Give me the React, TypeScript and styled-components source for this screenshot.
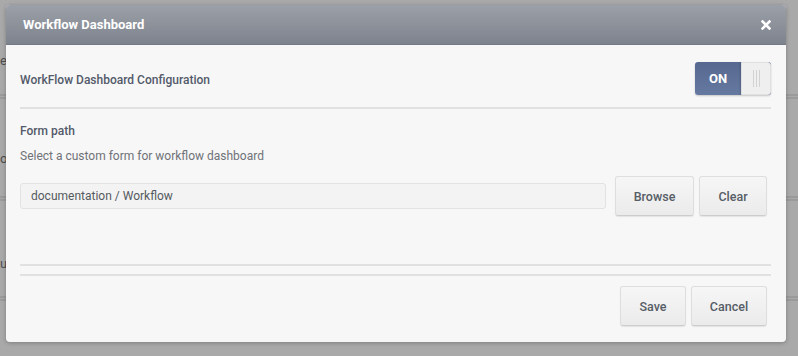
import React, { useState } from "react";
import styled, { createGlobalStyle } from "styled-components";

const GlobalStyle = createGlobalStyle`
  html, body {
    margin: 0;
    padding: 0;
    background: #a9a9a9;
    font-family: Roboto, "Liberation Sans", Arial, sans-serif;
  }
  #root {
    width: 798px;
    height: 356px;
    overflow: hidden;
    position: relative;
  }
`

const Backdrop = styled.div`
  width: 798px;
  height: 356px;
  background: #a9a9a9;
  display: flex;
  flex-direction: column;
  box-sizing: border-box;
`

const BackRow = styled.div<{ height: number; offset: number }>`
  height: ${({ height }) => height}px;
  display: flex;
  align-items: center;
  padding-top: ${({ offset }) => offset}px;
  border-bottom: 5px double #9a9a9a;
  box-sizing: border-box;
  font-size: 13px;
  color: #4e4e4e;
`

const BackLabel = styled.span`
  white-space: nowrap;
`

const Modal = styled.div`
  position: absolute;
  left: 6px;
  top: 5px;
  width: 780px;
  height: 337px;
  background: #f7f7f7;
  border-radius: 4px;
  box-shadow: 0 1px 4px rgba(0, 0, 0, 0.25);
  display: flex;
  flex-direction: column;
  overflow: hidden;
`

const Header = styled.div`
  height: 40px;
  flex: none;
  display: flex;
  align-items: center;
  justify-content: space-between;
  padding: 0 14px 0 17px;
  background: linear-gradient(to bottom, #9ca0a8, #7d838d);
  border-bottom: 1px solid #737a84;
  box-sizing: border-box;
`

const Title = styled.h3`
  margin: 0;
  font-size: 13px;
  font-weight: 700;
  color: #ffffff;
`

const CloseButton = styled.button`
  background: none;
  border: none;
  padding: 0;
  width: 12px;
  height: 12px;
  display: flex;
  align-items: center;
  justify-content: center;
  cursor: pointer;
`

const Body = styled.div`
  flex: 1;
  display: flex;
  flex-direction: column;
  padding: 0 15px 0 14px;
`

const ConfigRow = styled.div`
  display: flex;
  align-items: center;
  justify-content: space-between;
  padding: 17px 0 12px;
  border-bottom: 2px solid #e1e1e1;
`

const Label = styled.div`
  font-size: 12px;
  font-weight: 500;
  color: #535a6a;
  margin-top: 2px;
`

const Toggle = styled.button<{ on: boolean }>`
  width: 76px;
  height: 33px;
  padding: 0;
  display: flex;
  border: none;
  border-radius: 3px;
  overflow: hidden;
  cursor: pointer;
  box-shadow: 0 1px 2px rgba(0, 0, 0, 0.2);
  background: ${({ on }) => (on ? "linear-gradient(to bottom, #566890, #6679a0)" : "#cfcfcf")};
`

const ToggleText = styled.span`
  width: 46px;
  display: flex;
  align-items: center;
  justify-content: center;
  color: #ffffff;
  font-family: Roboto, "Liberation Sans", sans-serif;
  font-weight: 700;
  font-size: 13px;
`

const ToggleHandle = styled.span`
  flex: 1;
  display: flex;
  align-items: center;
  justify-content: center;
  gap: 2px;
  background: #efefef;
  border: 1px solid #e0e0e0;
  border-radius: 0 3px 3px 0;
  box-shadow: -1px 0 2px rgba(0, 0, 0, 0.15);
`

const Grip = styled.i`
  width: 1px;
  height: 17px;
  background: #d2d2d2;
`

const Section = styled.div`
  display: flex;
  flex-direction: column;
  padding-top: 13px;
`

const SubLabel = styled.div`
  font-size: 12px;
  color: #6f7278;
  margin-top: 11px;
`

const PathRow = styled.div`
  display: flex;
  align-items: center;
  gap: 5px;
  margin-top: 13px;
  padding-right: 4px;
`

const PathInput = styled.input`
  flex: 1;
  height: 26px;
  box-sizing: border-box;
  margin-right: 4px;
  padding: 0 10px;
  background: #f3f3f3;
  border: 1px solid #e2e2e2;
  border-radius: 3px;
  font-family: Roboto, "Liberation Sans", sans-serif;
  font-size: 12px;
  color: #555a60;
  outline: none;
`

const Button = styled.button<{ w: number }>`
  width: ${({ w }) => w}px;
  height: 40px;
  border: 1px solid #dedede;
  border-bottom-color: #cdcdcd;
  border-radius: 3px;
  background: linear-gradient(to bottom, #f6f6f6, #ebebeb);
  box-shadow: 0 1px 1px rgba(0, 0, 0, 0.08);
  font-family: Roboto, "Liberation Sans", sans-serif;
  font-size: 12.5px;
  font-weight: 500;
  color: #565d66;
  cursor: pointer;
`

const Divider = styled.hr<{ gap: number }>`
  margin: ${({ gap }) => gap}px 0 0;
  border: none;
  border-top: 2px solid #e1e1e1;
`

const Footer = styled.div`
  display: flex;
  justify-content: flex-end;
  gap: 5px;
  margin-top: 10px;
  padding-right: 4px;
`

function CloseIcon() {
  return (
    <svg width="10" height="10" viewBox="0 0 10 10">
      <path d="M1.5 1.5 L8.5 8.5 M8.5 1.5 L1.5 8.5" stroke="#ffffff" strokeWidth="2.6" strokeLinecap="square" />
    </svg>
  )
}

export default function App() {
  const [on, setOn] = useState(true)
  const [path] = useState("documentation / Workflow")

  return (
    <>
      <GlobalStyle />
      <Backdrop>
        <BackRow height={99} offset={26}>
          <BackLabel>e</BackLabel>
        </BackRow>
        <BackRow height={102} offset={22}>
          <BackLabel>oa</BackLabel>
        </BackRow>
        <BackRow height={100} offset={30}>
          <BackLabel>ue</BackLabel>
        </BackRow>
      </Backdrop>
      <Modal role="dialog" aria-labelledby="wf-title">
        <Header>
          <Title id="wf-title">Workflow Dashboard</Title>
          <CloseButton aria-label="Close">
            <CloseIcon />
          </CloseButton>
        </Header>
        <Body>
          <ConfigRow>
            <Label>WorkFlow Dashboard Configuration</Label>
            <Toggle on={on} onClick={() => setOn(!on)} aria-pressed={on}>
              <ToggleText>{on ? "ON" : "OFF"}</ToggleText>
              <ToggleHandle>
                <Grip />
                <Grip />
                <Grip />
              </ToggleHandle>
            </Toggle>
          </ConfigRow>
          <Section>
            <Label>Form path</Label>
            <SubLabel>Select a custom form for workflow dashboard</SubLabel>
            <PathRow>
              <PathInput value={path} readOnly />
              <Button w={79}>Browse</Button>
              <Button w={68}>Clear</Button>
            </PathRow>
          </Section>
          <Divider gap={48} />
          <Divider gap={8} />
          <Footer>
            <Button w={66}>Save</Button>
            <Button w={76}>Cancel</Button>
          </Footer>
        </Body>
      </Modal>
    </>
  )
}
